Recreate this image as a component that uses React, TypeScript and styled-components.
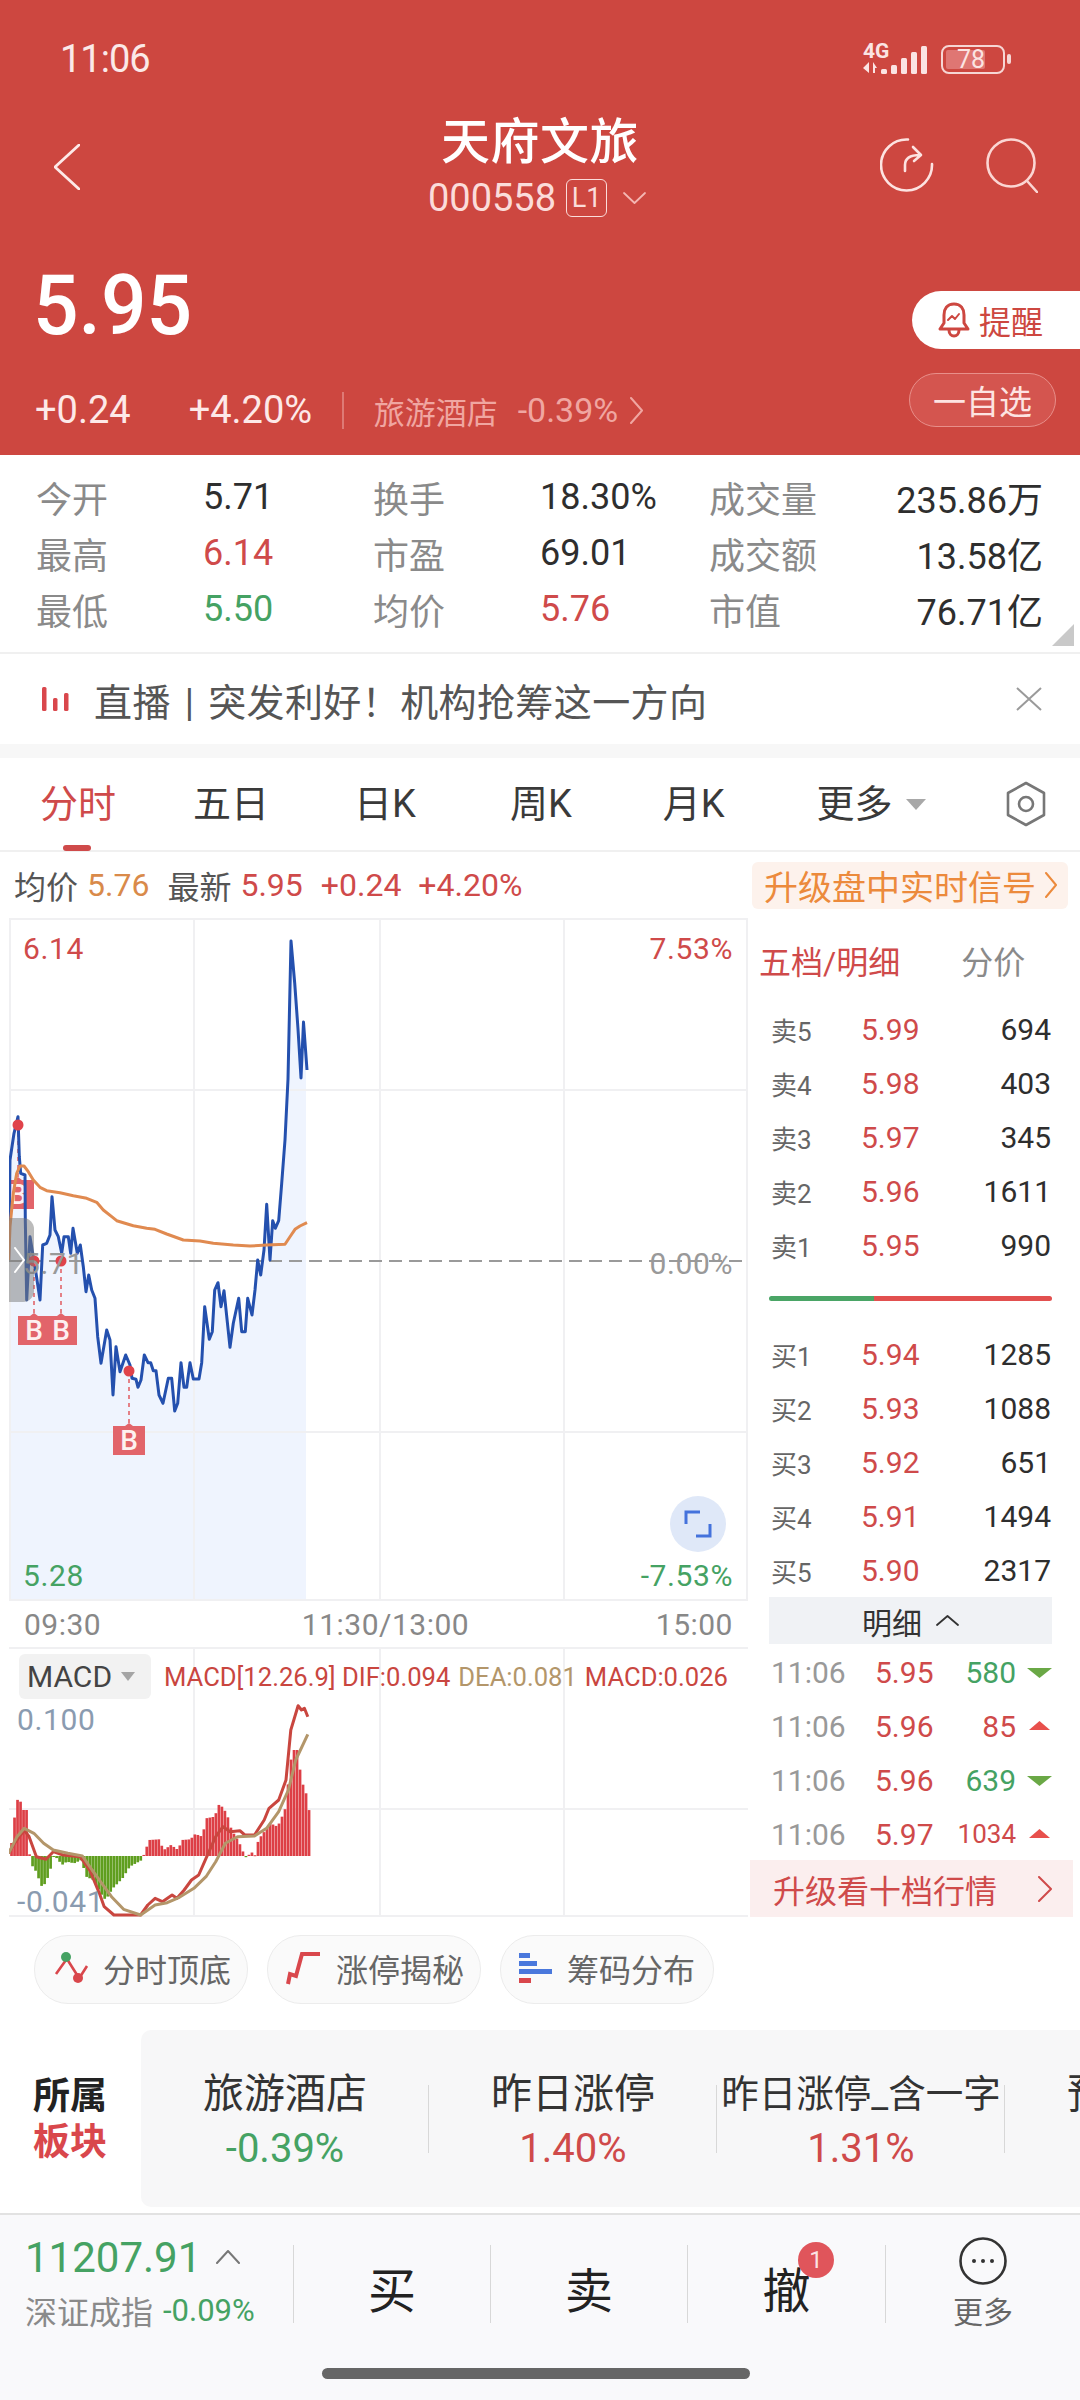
import React from "react";
import styled, { createGlobalStyle } from "styled-components";

const RED = "#cd4740";
const NUM_RED = "#cf4a4a";
const GREEN = "#45a263";
const GRAY = "#8a8a8a";

const Global = createGlobalStyle`
  html, body { margin: 0; padding: 0; background: #fff; }
  body { font-family: Roboto, "Noto Sans CJK SC", sans-serif; }
  * { box-sizing: border-box; }
`;

const Page = styled.div`
  width: 1080px; height: 2400px; overflow: hidden; background: #fff;
  display: flex; flex-direction: column; color: #333;
`;

/* ---------- header ---------- */
const Header = styled.header`
  height: 455px; background: ${RED}; color: #fff; flex: none;
`;
const StatusBar = styled.div`
  height: 118px; display: flex; align-items: center; justify-content: space-between;
  padding: 0 75px 0 60px;
`;
const Clock = styled.span`font-size: 38px; letter-spacing: -1px; color: #fbe9e8;`;
const StatusRight = styled.div`display: flex; align-items: center; gap: 13px;`;
const SignalSvg = styled.svg`margin-bottom: 7px; flex: none;`;
const Battery = styled.div`
  position: relative; width: 64px; height: 29px; border: 2.5px solid #f6d6d4; border-radius: 8px;
  padding: 3px; display: flex;
`;
const BatteryFill = styled.div`
  width: 39px; background: #df7673; border-radius: 2px; display: flex; align-items: center; justify-content: flex-end;
  font-size: 25px; line-height: 1; color: #fbe4e3; padding-right: 0;
`;
const BatteryNub = styled.span`
  position: absolute; right: -8px; top: 7px; width: 4px; height: 10px; background: #f6d6d4; border-radius: 2px;
`;
const Nav = styled.div`
  display: grid; grid-template-columns: 200px 1fr 200px; height: 99px;
`;
const BackCell = styled.div`padding: 26px 0 0 54px;`;
const TitleCell = styled.div`display: flex; flex-direction: column; align-items: center;`;
const Title = styled.div`font-size: 49px; line-height: 50px; font-weight: 500; letter-spacing: 0.5px; color: #fff;`;
const CodeRow = styled.div`
  margin: 11px 6px 0 0; height: 38px; display: flex; align-items: center; color: #fbdcda; font-size: 38px;
`;
const LevelTag = styled.span`
  margin-left: 10px; width: 41px; height: 38px; border: 1.5px solid #fbdcda; border-radius: 6px;
  font-size: 27px; display: flex; align-items: center; justify-content: center;
`;
const CodeCaret = styled.span`margin-left: 16px; display: flex;`;
const NavIcons = styled.div`display: flex; gap: 52px; justify-content: flex-end; padding: 20px 42px 0 0;`;
const Quote = styled.div`display: flex; justify-content: space-between; align-items: flex-start; padding-left: 33px;`;
const QuoteLeft = styled.div`padding-top: 44px;`;
const Price = styled.div`
  font-size: 84px; line-height: 90px; font-weight: 500; color: #fff; transform: scaleX(.955); transform-origin: left center;
`;
const ChangeRow = styled.div`
  margin-top: 39px; height: 40px; display: flex; align-items: center; font-size: 38px; color: #fde9e8; padding-left: 2px;
`;
const PercentGap = styled.span`margin-left: 58px;`;
const HeaderDivider = styled.span`width: 1.5px; height: 37px; background: #de7a75; margin: 0 30px 0 30px;`;
const SectorName = styled.span`font-size: 31px; color: #f0a6a1;`;
const SectorPct = styled.span`font-size: 34px; color: #f0a6a1; margin: 0 12px 0 20px;`;
const QuoteRight = styled.div`padding-top: 74px; display: flex; flex-direction: column; align-items: flex-end;`;
const RemindButton = styled.div`
  width: 168px; height: 58px; background: #fff; border-radius: 29px 0 0 29px; color: ${RED};
  display: flex; align-items: center; padding-left: 26px; gap: 9px; font-size: 32px;
`;
const WatchButton = styled.div`
  margin: 24px 24px 0 0; width: 147px; height: 54px; border-radius: 27px; border: 1.5px solid #e88f8a;
  background: #d4554f; color: #fde4e2; font-size: 33px; display: flex; align-items: center; justify-content: center;
`;

/* ---------- stats ---------- */
const Stats = styled.section`
  position: relative; flex: none; height: 199px; padding: 14px 0 0 36px; border-bottom: 2px solid #f0f0f0;
  display: grid; grid-template-columns: 167px 170px 167px 169px 180px 154px; grid-auto-rows: 56px; align-items: center;
`;
const StatLabel = styled.span`font-size: 36px; color: ${GRAY};`;
const StatValue = styled.span<{ $c?: string; $right?: boolean }>`
  font-size: 36px; color: ${(p) => p.$c || "#2e2e2e"}; text-align: ${(p) => (p.$right ? "right" : "left")}; white-space: nowrap;
`;
const Corner = styled.span`
  position: absolute; right: 6px; bottom: 6px; width: 0; height: 0;
  border-left: 22px solid transparent; border-bottom: 22px solid #c9c9c9;
`;

/* ---------- banner ---------- */
const Banner = styled.section`
  flex: none; height: 90px; display: flex; align-items: center; padding: 0 38px 0 42px; font-size: 38px; color: #555;
`;
const BannerText = styled.span`margin-left: 24px; flex: 1; white-space: nowrap; letter-spacing: .4px; word-spacing: 4px;`;
const Strip = styled.div`flex: none; height: 14px; background: #f7f7f7;`;

/* ---------- tabs ---------- */
const Tabs = styled.nav`
  flex: none; height: 94px; display: flex; align-items: center; padding: 0 33px 0 40px; gap: 91px;
  border-bottom: 2px solid #f0f0f0; font-size: 38px; color: #3a3a3a;
`;
const Tab = styled.span<{ $active?: boolean; $mr?: number }>`
  position: relative; line-height: 94px; white-space: nowrap; display: flex; align-items: center;
  color: ${(p) => (p.$active ? NUM_RED : "#3a3a3a")};
  margin-right: ${(p) => p.$mr || 0}px;
`;
const TabMark = styled.i`
  position: absolute; left: 23px; bottom: 0; width: 28px; height: 6px; border-radius: 3px; background: ${NUM_RED};
`;
const TabCaret = styled.i`
  margin-left: 13px; width: 0; height: 0; border-left: 10px solid transparent; border-right: 10px solid transparent;
  border-top: 11px solid #a8a8a8;
`;
const TabIcon = styled.span`margin-left: auto; display: flex;`;

/* ---------- info ---------- */
const InfoRow = styled.div`
  flex: none; height: 66px; display: flex; align-items: center; padding: 0 12px 0 14px; font-size: 32px; white-space: nowrap;
`;
const InfoText = styled.span<{ $c: string; $m?: number }>`
  color: ${(p) => p.$c}; margin-left: ${(p) => p.$m || 0}px;
`;
const UpgradeTag = styled.div`
  margin-left: auto; width: 316px; height: 47px; border-radius: 6px; background: #fdf2ec; color: #ec8a3c;
  font-size: 34px; display: flex; align-items: center; padding-left: 12px; gap: 9px; letter-spacing: 0;
`;

/* ---------- body ---------- */
const Body = styled.div`flex: none; height: 999px; display: grid; grid-template-columns: 750px 330px;`;
const LeftCol = styled.div`display: flex; flex-direction: column; padding-left: 9px;`;
const ChartBox = styled.div`position: relative; width: 739px; height: 683px;`;
const ChartSvg = styled.svg`display: block; position: absolute; inset: 0; width: 100%; height: 100%;`;
const ChartLabel = styled.span<{ $c: string; $top: number; $left?: number; $right?: number }>`
  position: absolute; top: ${(p) => p.$top}px; font-size: 30px; line-height: 36px; letter-spacing: .6px; color: ${(p) => p.$c};
  ${(p) => (p.$left !== undefined ? `left: ${p.$left}px;` : "")}
  ${(p) => (p.$right !== undefined ? `right: ${p.$right}px;` : "")}
`;
const Handle = styled.div`
  position: absolute; left: 0; top: 300px; width: 25px; height: 84px; border-radius: 0 11px 11px 0;
  background: rgba(120,120,120,.5); display: flex; align-items: center; padding-left: 5px;
`;
const Expand = styled.div`
  position: absolute; left: 661px; top: 578px; width: 56px; height: 56px; border-radius: 50%; background: #dfe8f8;
  display: flex; align-items: center; justify-content: center;
`;
const Axis = styled.div`
  flex: none; width: 739px; height: 46px; padding: 0 15px 0 15px; display: flex; justify-content: space-between; align-items: center;
  font-size: 30px; color: #888; letter-spacing: .5px;
`;
const AxisMid = styled.span`margin-left: 14px;`;
const MacdBox = styled.div`position: relative; width: 739px; height: 270px;`;
const MacdHead = styled.div`
  position: absolute; left: 10px; top: 7px; display: flex; align-items: center; white-space: nowrap;
`;
const MacdPill = styled.div`
  width: 132px; height: 45px; border-radius: 6px; background: #f2f2f2; color: #444; font-size: 30px;
  display: flex; align-items: center; padding-left: 8px; gap: 9px;
`;
const MacdCaret = styled.i`
  width: 0; height: 0; border-left: 7.5px solid transparent; border-right: 7.5px solid transparent; border-top: 9px solid #a5a5a5;
`;
const MacdLegend = styled.span<{ $c: string; $m?: number }>`
  font-size: 25.6px; color: ${(p) => p.$c}; margin-left: ${(p) => p.$m ?? 8}px;
`;

const RightCol = styled.div`display: flex; flex-direction: column;`;
const DepthHead = styled.div`
  height: 84px; display: flex; align-items: center; padding-left: 9px; font-size: 32px; gap: 61px; color: ${GRAY};
`;
const DepthActive = styled.span`color: ${NUM_RED};`;
const DepthRow = styled.div`
  height: 54px; display: grid; grid-template-columns: 90px 60px 1fr; align-items: center; padding: 0 29px 0 21px; font-size: 30px;
`;
const DepthLabel = styled.span`font-size: 26px; color: #666; white-space: nowrap;`;
const DepthPrice = styled.span`color: ${NUM_RED};`;
const Amount = styled.span`color: #2e2e2e; text-align: right;`;
const Ratio = styled.div`
  margin: 24px 28px 26px 19px; height: 5px; border-radius: 3px; display: flex; overflow: hidden;
`;
const RatioPart = styled.span<{ $c: string; $w: number }>`
  display: block; width: ${(p) => p.$w}px; background: ${(p) => p.$c};
`;
const DetailBar = styled.div`
  margin: 0 28px 1px 19px; height: 47px; background: #f0f2f5; display: flex; align-items: center; justify-content: center;
  font-size: 30px; color: #333; gap: 14px;
`;
const TickRow = styled.div`
  height: 54px; display: grid; grid-template-columns: 104px 60px 1fr 36px; align-items: center; padding: 0 28px 0 21px; font-size: 30px;
`;
const TickTime = styled.span`color: #999;`;
const TickAmount = styled.span<{ $c: string; $small?: boolean }>`
  color: ${(p) => p.$c}; text-align: right; font-size: ${(p) => (p.$small ? 26 : 30)}px;
`;
const TickMark = styled.span`display: flex; justify-content: flex-end;`;
const UpgradeBar = styled.div`
  margin-top: -1px; width: 323px; height: 57px; background: #fbeeee; color: ${NUM_RED}; font-size: 32px;
  display: flex; align-items: center; justify-content: space-between; padding: 0 21px 0 23px; white-space: nowrap;
`;

/* ---------- chips ---------- */
const Chips = styled.div`flex: none; height: 113px; display: flex; gap: 19px; padding: 18px 0 0 34px;`;
const Chip = styled.div`
  width: 214px; height: 69px; border-radius: 34px; background: #fafafa; border: 1.5px solid #ececec; color: #666;
  font-size: 32px; display: flex; align-items: center; gap: 14px; padding: 0 0 3px 18px; white-space: nowrap;
`;

/* ---------- sector ---------- */
const Sector = styled.section`flex: none; height: 177px; display: flex; overflow: hidden;`;
const SectorTitle = styled.div`
  width: 141px; flex: none; padding: 44px 0 0 33px; font-size: 37px; line-height: 46px; font-weight: 700; color: #222;
`;
const SectorTitleRed = styled.div`color: #d9474c;`;
const SectorList = styled.div`
  flex: 1; display: flex; background: #f7f7f8; border-radius: 10px 0 0 10px; padding-top: 39px;
`;
const SectorItem = styled.div<{ $divider?: boolean }>`
  position: relative; width: 288px; flex: none; display: flex; flex-direction: column; align-items: center;
  white-space: nowrap;
  &::after {
    content: ""; position: absolute; right: 0; top: 16px; width: 1.5px; height: 68px; background: #d8d8d8;
    display: ${(p) => (p.$divider ? "block" : "none")};
  }
`;
const SectorItemName = styled.div<{ $small?: boolean }>`
  height: 50px; line-height: 50px; font-size: ${(p) => (p.$small ? 37.5 : 41)}px; color: #333;
`;
const SectorItemValue = styled.div<{ $c: string }>`
  margin-top: 10px; font-size: 40px; line-height: 40px; color: ${(p) => p.$c};
`;

/* ---------- footer ---------- */
const Footer = styled.footer`
  position: relative; flex: 1; margin-top: 6px; background: #f9f9fb; border-top: 2px solid #e2e2e2;
`;
const FooterGrid = styled.div`
  display: grid; grid-template-columns: 293px 197px 197px 198px 195px; height: 112px; margin-top: 30px;
`;
const IndexCell = styled.div`padding-left: 25px; margin-top: -11px;`;
const IndexTop = styled.div`
  height: 46px; display: flex; align-items: center; gap: 15px; font-size: 42px; color: ${GREEN};
`;
const IndexBottom = styled.div`
  margin-top: 10px; height: 40px; display: flex; align-items: center; gap: 10px; font-size: 32px; color: ${GRAY}; white-space: nowrap;
`;
const IndexPct = styled.span`font-size: 31px; color: ${GREEN};`;
const ActionCell = styled.div`
  position: relative; display: flex; align-items: center; justify-content: center; height: 78px;
  font-size: 48px; color: #222; border-left: 1.5px solid #d8d8d8; padding-top: 6px;
`;
const Badge = styled.span`
  position: absolute; left: 110px; top: -3px; width: 36px; height: 36px; border-radius: 50%; background: #e0555b; color: #fbe3e3;
  font-size: 24px; display: flex; align-items: center; justify-content: center;
`;
const MoreCell = styled.div`
  height: 78px; border-left: 1.5px solid #d8d8d8; display: flex; flex-direction: column; align-items: center;
  font-size: 30px; color: #666; line-height: 36px;
`;
const MoreIcon = styled.svg`margin-top: -8px; margin-bottom: 10px; flex: none;`;
const HomeBar = styled.div`
  position: absolute; left: 322px; bottom: 21px; width: 428px; height: 11px; border-radius: 6px; background: #666;
`;

/* ---------- icons ---------- */
type ChevProps = { w: number; h: number; c: string; d: "l" | "r" | "u" | "d"; sw?: number };
const Chev = ({ w, h, c, d, sw = 2 }: ChevProps) => {
  const path = {
    l: `M${w - 1} 1L1 ${h / 2}L${w - 1} ${h - 1}`,
    r: `M1 1L${w - 1} ${h / 2}L1 ${h - 1}`,
    u: `M1 ${h - 1}L${w / 2} 1L${w - 1} ${h - 1}`,
    d: `M1 1L${w / 2} ${h - 1}L${w - 1} 1`,
  }[d];
  return (
    <svg width={w} height={h} viewBox={`0 0 ${w} ${h}`} fill="none">
      <path d={path} stroke={c} strokeWidth={sw} strokeLinecap="round" strokeLinejoin="round" />
    </svg>
  );
};

const Signal = () => (
  <SignalSvg width="66" height="39" viewBox="862 36 66 39" fill="#fbe4e3">
    <text x="863" y="58" fontSize="21" fontWeight="700" fontFamily="Roboto, sans-serif">4G</text>
    <path d="M869 62v11l-6-5zM873 62v11h2v-5h2z" />
    <rect x="881" y="69" width="6" height="5" rx="1.5" />
    <rect x="891" y="65" width="6" height="9" rx="1.5" />
    <rect x="901" y="58" width="6" height="16" rx="1.5" />
    <rect x="911" y="52" width="6" height="22" rx="1.5" />
    <rect x="921" y="46" width="6" height="28" rx="1.5" />
  </SignalSvg>
);

const ShareIcon = () => (
  <svg width="54" height="54" viewBox="0 0 54 54" fill="none" stroke="#fde3e1" strokeWidth="2.6" strokeLinecap="round" strokeLinejoin="round">
    <path d="M28 1.5A25.5 25.5 0 1 0 52 26" />
    <path d="M25 33v-6c0-7 5-10 15-10M33 9l8 8-7 6" />
  </svg>
);
const SearchIcon = () => (
  <svg width="52" height="55" viewBox="0 0 52 55" fill="none" stroke="#fbd6d3" strokeWidth="2.6" strokeLinecap="round">
    <circle cx="25" cy="25" r="23.5" />
    <path d="M42 44l9 10" />
  </svg>
);
const BellIcon = () => (
  <svg width="32" height="36" viewBox="0 0 32 36" fill="none" stroke={RED} strokeWidth="3" strokeLinejoin="round" strokeLinecap="round">
    <path d="M16 2c-7 0-10 5-10 11v8l-4 6h28l-4-6v-8c0-6-3-11-10-11z" />
    <path d="M11 28c0 8 10 8 10 0" />
    <path d="M10 18l4-4 3 3 4-5" strokeWidth="2" />
  </svg>
);
const LiveIcon = () => (
  <svg width="28" height="24" viewBox="0 0 28 24" fill="#d9474c">
    <rect x="0" y="0" width="4.5" height="24" rx="1.5" />
    <rect x="11" y="11" width="4.5" height="13" rx="1.5" />
    <rect x="22" y="6" width="4.5" height="18" rx="1.5" />
  </svg>
);
const CloseIcon = () => (
  <svg width="26" height="24" viewBox="0 0 26 24" fill="none" stroke="#9a9a9a" strokeWidth="2">
    <path d="M1 1l24 22M25 1L1 23" />
  </svg>
);
const HexIcon = () => (
  <svg width="42" height="46" viewBox="0 0 42 46" fill="none" stroke="#777" strokeWidth="2.6" strokeLinejoin="round">
    <path d="M21 2l18 10v22L21 44 3 34V12z" />
    <circle cx="21" cy="23" r="7" />
  </svg>
);
const TurnIcon = () => (
  <svg width="36" height="36" viewBox="0 0 36 36" fill="none">
    <path d="M3 24L13 10M14 9L26 28M27 27l7-11" stroke="#d9474c" strokeWidth="2.6" />
    <path d="M13 9l3-3" stroke="#45a263" strokeWidth="2.6" />
    <circle cx="13" cy="7" r="5" fill="#45a263" />
    <circle cx="25" cy="28" r="5" fill="#d9474c" />
  </svg>
);
const LimitIcon = () => (
  <svg width="36" height="36" viewBox="0 0 36 36" fill="none" stroke="#d9474c" strokeWidth="4">
    <path d="M2 34l2-10 6 2 6-22h18" />
  </svg>
);
const ChipIcon = () => (
  <svg width="34" height="30" viewBox="0 0 34 30">
    <rect x="0" y="0" width="11" height="5" fill="#4a78dc" />
    <rect x="0" y="8" width="18" height="5" fill="#4a78dc" />
    <rect x="0" y="16" width="33" height="5" fill="#4a78dc" />
    <rect x="0" y="25" width="12" height="5" fill="#d9474c" />
  </svg>
);
const ExpandIcon = () => (
  <svg width="28" height="28" viewBox="0 0 28 28" fill="none" stroke="#4472dc" strokeWidth="3">
    <path d="M2 14V2h14M26 14v12H12" />
  </svg>
);

/* ---------- chart data ---------- */
const z8 = (p: number[]) => [p[0] / 3, 1060 + p[1] / 3];
const z5 = (p: number[]) => [p[0] / 2.063, 1640 + p[1] / 3];
const toPts = (a: number[][]) => a.map((p) => p.map((n) => n.toFixed(1)).join(",")).join(" ");

const blueRaw = [[26,600],[30,300],[42,220],[54,170],[58,290],[62,340],[75,345],[76,480],[80,720],[90,530],[100,590],[108,640],[120,720],[128,555],[140,550],[150,525],[156,410],[165,510],[175,530],[185,580],[192,530],[205,530],[212,580],[219,505],[232,580],[241,555],[250,620],[258,695],[266,645],[275,690],[285,715],[293,830],[303,910],[320,810],[330,840],[339,1005],[348,860],[360,935],[377,885],[390,915],[396,955],[408,958],[414,982],[423,960],[433,885],[444,908],[452,908],[460,932],[468,932],[477,1005],[489,1030],[505,955],[515,955],[524,1053],[533,1030],[543,908],[552,982],[560,982],[570,908],[580,957],[597,957],[605,908],[614,740],[628,838],[637,815],[644,690],[654,668],[663,740],[672,692],[690,862],[700,790],[716,715],[725,815],[736,815],[743,715],[756,765],[765,690],[773,600],[782,645],[792,570],[800,433],[810,600],[818,482],[826,505],[836,482],[845,370],[855,240]];
const blue = [...blueRaw.map(z8), [288,1079],[291,941],[294.7,983],[298,1029],[301,1078],[303.5,1022],[307,1070]];
const orangeRaw = [[26,600],[30,500],[40,400],[50,340],[60,318],[72,318],[85,335],[100,360],[120,382],[140,392],[180,398],[220,407],[260,415],[290,427],[310,450],[335,470],[350,482],[400,497],[440,505],[465,508],[500,522],[550,540],[600,543],[640,550],[700,555],[750,558],[800,555],[855,553],[870,530],[885,508],[900,498],[921,488]];
const orange = orangeRaw.map(z8);
const fill = [[9,1601],[9,1261],...blue.slice(0,-1),[306,1070],[306,1601]];

const envelope = [[18,648],[24,570],[30,500],[37,458],[42,510],[52,510],[58,640],[60,670],[70,690],[85,745],[100,700],[106,648],[115,655],[125,675],[135,665],[150,670],[165,660],[175,710],[190,720],[205,760],[215,780],[230,745],[250,715],[265,680],[290,660],[295,640],[305,600],[325,598],[335,630],[350,615],[365,630],[372,600],[390,598],[400,582],[415,590],[422,535],[440,530],[450,490],[465,520],[475,570],[490,605],[500,640],[506,655],[515,635],[525,648],[530,600],[545,570],[555,550],[570,560],[585,510],[600,330],[610,330],[620,425],[628,455],[636,520]];
const BASE = 648;
const envAt = (x: number) => {
  for (let i = 1; i < envelope.length; i++) {
    if (x <= envelope[i][0]) {
      const [x0, y0] = envelope[i - 1];
      const [x1, y1] = envelope[i];
      return y0 + ((y1 - y0) * (x - x0)) / (x1 - x0);
    }
  }
  return BASE;
};
const barXs: number[] = [];
for (let x = 21; x < 637; x += 6.2) barXs.push(x);

const dif = [[18,640],[30,610],[50,570],[60,590],[75,650],[95,658],[110,635],[130,645],[165,650],[185,690],[205,760],[215,800],[235,825],[290,825],[305,795],[320,775],[335,785],[355,765],[365,775],[380,750],[395,720],[410,705],[425,655],[445,590],[460,560],[475,575],[495,572],[505,585],[525,585],[545,540],[555,505],[575,480],[590,420],[600,270],[615,197],[622,210],[628,205],[635,230]].map(z5);
const dea = [[18,640],[35,590],[50,565],[70,580],[90,610],[110,630],[140,640],[170,648],[190,690],[210,730],[230,770],[255,808],[290,825],[320,795],[345,788],[370,772],[400,745],[425,710],[445,665],[465,610],[490,590],[525,588],[550,565],[575,515],[595,450],[610,360],[635,283]].map(z5);

const GridV = [194, 380, 564];

const Marker = ({ cx, y }: { cx: number; y: number }) => (
  <g>
    <path d={`M${cx - 16} ${y + 3}H${cx - 4}L${cx} ${y}L${cx + 4} ${y + 3}H${cx + 16}V${y + 32}H${cx - 16}Z`} fill="#e2646a" />
    <text x={cx} y={y + 27} textAnchor="middle" fontSize="28" fontWeight="500" fill="#fdf0f0" fontFamily="Roboto, sans-serif">B</text>
  </g>
);

const PriceChart = () => (
  <ChartSvg viewBox="9 918 739 683" preserveAspectRatio="none">
    <polygon points={toPts(fill)} fill="#eff4fe" />
    <g stroke="#f0f0f2" strokeWidth="2">
      <path d="M9 919H748M9 1090H748M9 1432H748M9 1600H748M10 918V1601M747 918V1601" />
      {GridV.map((x) => <path key={x} d={`M${x} 918V1601`} />)}
    </g>
    <path d="M9 1261H750" stroke="#9a9a9a" strokeWidth="2" strokeDasharray="13 7" />
    <Marker cx={18} y={1177} />
    <Marker cx={34} y={1313} />
    <Marker cx={61} y={1313} />
    <Marker cx={129} y={1423} />
    <g stroke="#e2646a" strokeWidth="1.6" strokeDasharray="4 4">
      <path d="M18 1125V1177M34 1261V1313M61 1261V1313M129 1371V1423" />
    </g>
    <polyline points={toPts(blue)} fill="none" stroke="#2450ae" strokeWidth="3" strokeLinejoin="round" />
    <polyline points={toPts(orange)} fill="none" stroke="#e08a50" strokeWidth="3" strokeLinejoin="round" />
    <g fill="#e0434a">
      <circle cx="18" cy="1125" r="5.5" />
      <circle cx="34" cy="1261" r="5.5" />
      <circle cx="61" cy="1261" r="5.5" />
      <circle cx="129" cy="1371" r="5.5" />
    </g>
  </ChartSvg>
);

const MacdChart = () => (
  <ChartSvg viewBox="9 1647 739 270" preserveAspectRatio="none">
    <g stroke="#f0f0f2" strokeWidth="2">
      <path d="M9 1648H748M9 1809H748M9 1916H748" />
      {GridV.map((x) => <path key={x} d={`M${x} 1647V1917`} />)}
    </g>
    {barXs.map((x) => {
      const y = envAt(x);
      const up = y <= BASE;
      const rx = x / 2.063;
      const top = 1640 + Math.min(y, BASE) / 3;
      const bot = 1640 + Math.max(y, BASE) / 3;
      return <rect key={x} x={rx} y={top} width="2.7" height={Math.max(bot - top, 1)} fill={up ? "#dd3f46" : "#5f9e1f"} />;
    })}
    <polyline points={toPts(dif)} fill="none" stroke="#c9463f" strokeWidth="3" strokeLinejoin="round" />
    <polyline points={toPts(dea)} fill="none" stroke="#b3966a" strokeWidth="3" strokeLinejoin="round" />
  </ChartSvg>
);

const Tri = ({ up }: { up: boolean }) => (
  <svg width="25" height="11" viewBox="0 0 25 11">
    <path d={up ? "M12.5 0L23 9H2z" : "M0 1h25L12.5 11z"} fill={up ? "#e8504c" : "#6aa846"} />
  </svg>
);

const asks = [["卖5","5.99","694"],["卖4","5.98","403"],["卖3","5.97","345"],["卖2","5.96","1611"],["卖1","5.95","990"]];
const bids = [["买1","5.94","1285"],["买2","5.93","1088"],["买3","5.92","651"],["买4","5.91","1494"],["买5","5.90","2317"]];
const ticks = [
  { p: "5.95", a: "580", up: false },
  { p: "5.96", a: "85", up: true },
  { p: "5.96", a: "639", up: false },
  { p: "5.97", a: "1034", up: true, small: true },
];
const statRows = [
  ["今开","5.71","","换手","18.30%","","成交量","235.86万"],
  ["最高","6.14",NUM_RED,"市盈","69.01","","成交额","13.58亿"],
  ["最低","5.50",GREEN,"均价","5.76",NUM_RED,"市值","76.71亿"],
];

const DepthRows = ({ rows }: { rows: string[][] }) => (
  <>
    {rows.map((r) => (
      <DepthRow key={r[0]}>
        <DepthLabel>{r[0]}</DepthLabel>
        <DepthPrice>{r[1]}</DepthPrice>
        <Amount>{r[2]}</Amount>
      </DepthRow>
    ))}
  </>
);

export default function App() {
  return (
    <Page>
      <Global />
      <Header>
        <StatusBar>
          <Clock>11:06</Clock>
          <StatusRight>
            <Signal />
            <Battery>
              <BatteryFill>78</BatteryFill>
              <BatteryNub />
            </Battery>
          </StatusRight>
        </StatusBar>
        <Nav>
          <BackCell><Chev w={26} h={46} c="#fde9e8" d="l" sw={2.8} /></BackCell>
          <TitleCell>
            <Title>天府文旅</Title>
            <CodeRow>
              000558
              <LevelTag>L1</LevelTag>
              <CodeCaret><Chev w={23} h={12} c="#f4b6b2" d="d" sw={1.8} /></CodeCaret>
            </CodeRow>
          </TitleCell>
          <NavIcons>
            <ShareIcon />
            <SearchIcon />
          </NavIcons>
        </Nav>
        <Quote>
          <QuoteLeft>
            <Price>5.95</Price>
            <ChangeRow>
              +0.24
              <PercentGap>+4.20%</PercentGap>
              <HeaderDivider />
              <SectorName>旅游酒店</SectorName>
              <SectorPct>-0.39%</SectorPct>
              <Chev w={13} h={27} c="#f0a6a1" d="r" sw={2} />
            </ChangeRow>
          </QuoteLeft>
          <QuoteRight>
            <RemindButton><BellIcon />提醒</RemindButton>
            <WatchButton>一自选</WatchButton>
          </QuoteRight>
        </Quote>
      </Header>

      <Stats>
        {statRows.map((r) => (
          <React.Fragment key={r[0]}>
            <StatLabel>{r[0]}</StatLabel>
            <StatValue $c={r[2] || undefined}>{r[1]}</StatValue>
            <StatLabel>{r[3]}</StatLabel>
            <StatValue $c={r[5] || undefined}>{r[4]}</StatValue>
            <StatLabel>{r[6]}</StatLabel>
            <StatValue $right>{r[7]}</StatValue>
          </React.Fragment>
        ))}
        <Corner />
      </Stats>

      <Banner>
        <LiveIcon />
        <BannerText>直播 | 突发利好！机构抢筹这一方向</BannerText>
        <CloseIcon />
      </Banner>
      <Strip />

      <Tabs>
        <Tab $active $mr={-14}>分时<TabMark /></Tab>
        <Tab $mr={-6}>五日</Tab>
        <Tab $mr={3}>日K</Tab>
        <Tab>周K</Tab>
        <Tab $mr={1}>月K</Tab>
        <Tab $mr={-91}>更多<TabCaret /></Tab>
        <TabIcon><HexIcon /></TabIcon>
      </Tabs>

      <InfoRow>
        <InfoText $c="#555">均价</InfoText>
        <InfoText $c="#d98a4a" $m={9}>5.76</InfoText>
        <InfoText $c="#555" $m={18}>最新</InfoText>
        <InfoText $c={NUM_RED} $m={9}>5.95</InfoText>
        <InfoText $c={NUM_RED} $m={18}>+0.24</InfoText>
        <InfoText $c={NUM_RED} $m={17}>+4.20%</InfoText>
        <UpgradeTag>升级盘中实时信号<Chev w={12} h={26} c="#ec8a3c" d="r" sw={2} /></UpgradeTag>
      </InfoRow>

      <Body>
        <LeftCol>
          <ChartBox>
            <PriceChart />
            <ChartLabel $c={NUM_RED} $top={13} $left={14}>6.14</ChartLabel>
            <ChartLabel $c={NUM_RED} $top={13} $right={15}>7.53%</ChartLabel>
            <ChartLabel $c="#999" $top={328} $left={14}>5.71</ChartLabel>
            <ChartLabel $c="#999" $top={328} $right={15}>0.00%</ChartLabel>
            <ChartLabel $c={GREEN} $top={640} $left={14}>5.28</ChartLabel>
            <ChartLabel $c={GREEN} $top={640} $right={15}>-7.53%</ChartLabel>
            <Handle><Chev w={11} h={26} c="#fff" d="r" sw={2} /></Handle>
            <Expand><ExpandIcon /></Expand>
          </ChartBox>
          <Axis>
            <span>09:30</span>
            <AxisMid>11:30/13:00</AxisMid>
            <span>15:00</span>
          </Axis>
          <MacdBox>
            <MacdChart />
            <ChartLabel $c="#8a9bb0" $top={55} $left={8}>0.100</ChartLabel>
            <ChartLabel $c="#8a9bb0" $top={237} $left={8}>-0.041</ChartLabel>
            <MacdHead>
              <MacdPill>MACD<MacdCaret /></MacdPill>
              <MacdLegend $c="#c9463f" $m={13}>MACD[12.26.9] DIF:0.094</MacdLegend>
              <MacdLegend $c="#b3966a">DEA:0.081</MacdLegend>
              <MacdLegend $c="#c9463f">MACD:0.026</MacdLegend>
            </MacdHead>
          </MacdBox>
        </LeftCol>
        <RightCol>
          <DepthHead>
            <DepthActive>五档/明细</DepthActive>
            <span>分价</span>
          </DepthHead>
          <DepthRows rows={asks} />
          <Ratio>
            <RatioPart $c="#4aa566" $w={105} />
            <RatioPart $c="#e2504f" $w={178} />
          </Ratio>
          <DepthRows rows={bids} />
          <DetailBar>明细<Chev w={23} h={11} c="#333" d="u" sw={1.8} /></DetailBar>
          {ticks.map((t, i) => (
            <TickRow key={i}>
              <TickTime>11:06</TickTime>
              <DepthPrice>{t.p}</DepthPrice>
              <TickAmount $c={t.up ? NUM_RED : GREEN} $small={t.small}>{t.a}</TickAmount>
              <TickMark><Tri up={t.up} /></TickMark>
            </TickRow>
          ))}
          <UpgradeBar>升级看十档行情<Chev w={14} h={26} c={NUM_RED} d="r" sw={2} /></UpgradeBar>
        </RightCol>
      </Body>

      <Chips>
        <Chip><TurnIcon />分时顶底</Chip>
        <Chip><LimitIcon />涨停揭秘</Chip>
        <Chip><ChipIcon />筹码分布</Chip>
      </Chips>

      <Sector>
        <SectorTitle>所属<SectorTitleRed>板块</SectorTitleRed></SectorTitle>
        <SectorList>
          <SectorItem $divider>
            <SectorItemName>旅游酒店</SectorItemName>
            <SectorItemValue $c={GREEN}>-0.39%</SectorItemValue>
          </SectorItem>
          <SectorItem $divider>
            <SectorItemName>昨日涨停</SectorItemName>
            <SectorItemValue $c={NUM_RED}>1.40%</SectorItemValue>
          </SectorItem>
          <SectorItem $divider>
            <SectorItemName $small>昨日涨停_含一字</SectorItemName>
            <SectorItemValue $c={NUM_RED}>1.31%</SectorItemValue>
          </SectorItem>
          <SectorItem>
            <SectorItemName>预盈预增</SectorItemName>
          </SectorItem>
        </SectorList>
      </Sector>

      <Footer>
        <FooterGrid>
          <IndexCell>
            <IndexTop>11207.91<Chev w={24} h={14} c="#777" d="u" sw={2} /></IndexTop>
            <IndexBottom>深证成指<IndexPct>-0.09%</IndexPct></IndexBottom>
          </IndexCell>
          <ActionCell>买</ActionCell>
          <ActionCell>卖</ActionCell>
          <ActionCell>撤<Badge>1</Badge></ActionCell>
          <MoreCell>
            <MoreIcon width="48" height="48" viewBox="0 0 48 48" fill="none">
              <circle cx="24" cy="24" r="22.5" stroke="#333" strokeWidth="2.6" />
              <circle cx="15" cy="24" r="2" fill="#333" />
              <circle cx="24" cy="24" r="2" fill="#333" />
              <circle cx="33" cy="24" r="2" fill="#333" />
            </MoreIcon>
            更多
          </MoreCell>
        </FooterGrid>
        <HomeBar />
      </Footer>
    </Page>
  );
}
